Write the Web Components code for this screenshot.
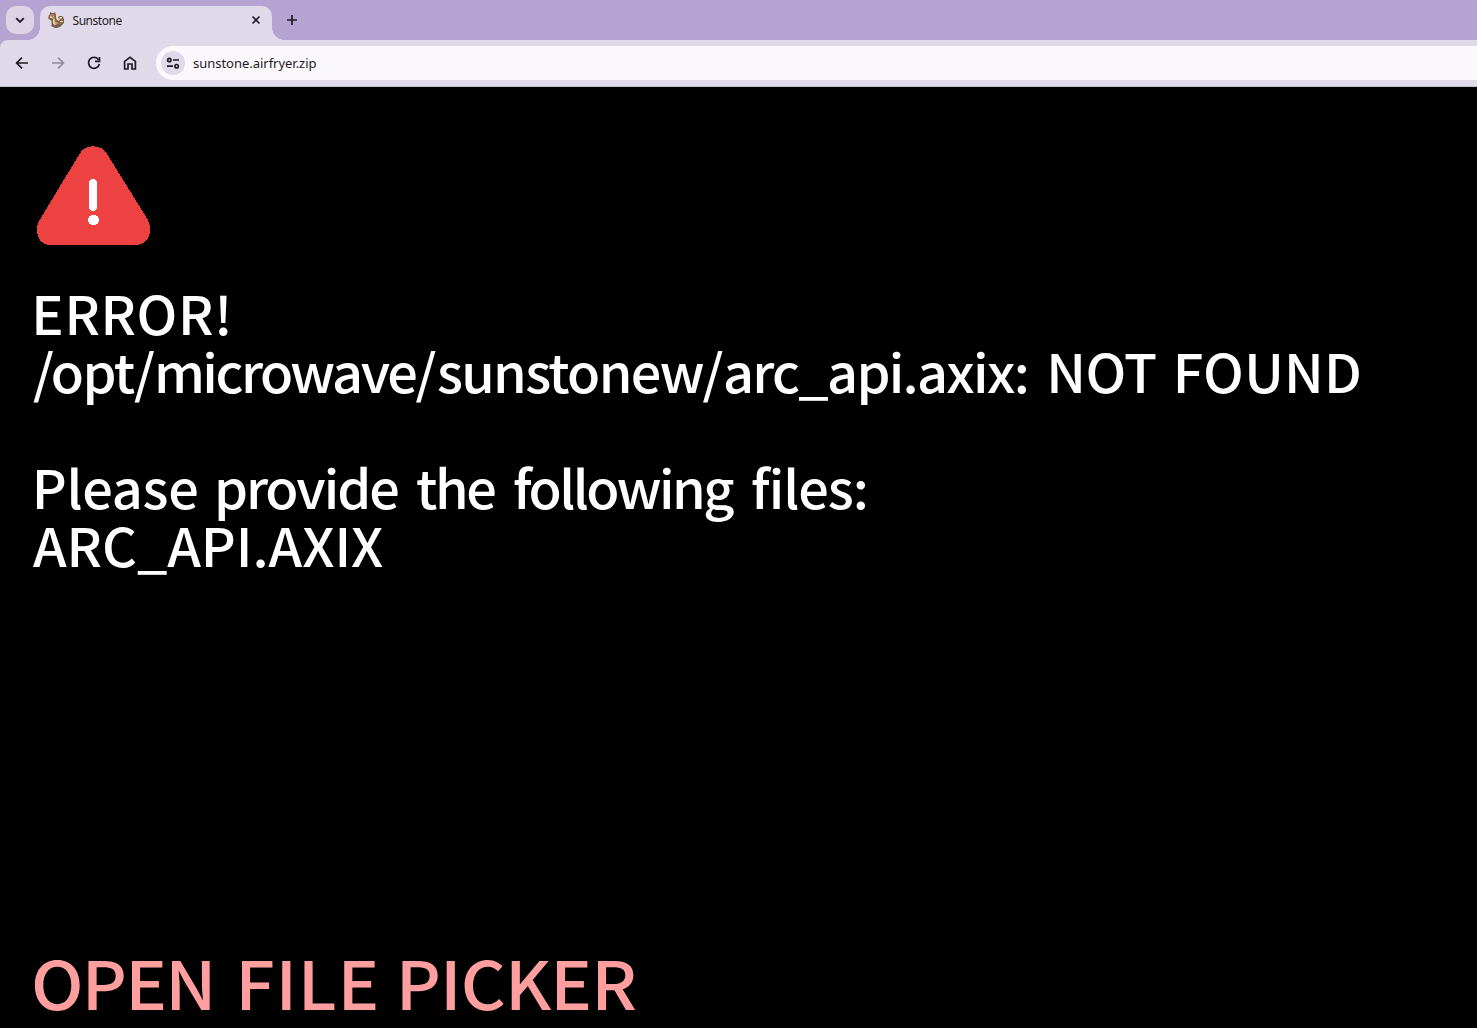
<!DOCTYPE html>
<html lang="en">
<head>
<meta charset="utf-8">
<title>Sunstone</title>
<style>
html,body{margin:0;height:100%;background:#000;overflow:hidden}
</style>
</head>
<body>
<app-window></app-window>
<script>
/* One line of text whose words are spaced to given ink positions.
   fit = "start:end start:end ..." for each segment; segments are split by "|",
   and a segment that follows a blank keeps it. stretch widens the glyphs. */
class FitLine extends HTMLElement {
  connectedCallback() {
    const root = this.attachShadow({mode: 'open'});
    const k = Number(this.getAttribute('stretch') || 1);
    root.innerHTML = '<style>:host{display:block;white-space:pre;transform-origin:0 0}</style>';
    if (k !== 1) this.style.transform = `scaleX(${k})`;
    const cs = getComputedStyle(this);
    const ctx = document.createElement('canvas').getContext('2d');
    ctx.font = `${cs.fontWeight} ${cs.fontSize} ${cs.fontFamily}`;
    const space = ctx.measureText(' ').width;
    const fits = this.getAttribute('fit').split(' ').map(p => p.split(':').map(v => v / k));
    let cursor = 0;
    this.getAttribute('text').split('|').forEach((raw, i) => {
      if (raw.startsWith(' ')) { root.append(' '); cursor += space; }
      const word = raw.trim(), m = ctx.measureText(word), [a, b] = fits[i];
      const ls = ((b - a) - (m.actualBoundingBoxRight + m.actualBoundingBoxLeft)) / (word.length - 1);
      const s = document.createElement('span');
      s.textContent = word;
      const start = a + m.actualBoundingBoxLeft;
      s.style.letterSpacing = ls + 'px';
      s.style.marginLeft = (start - cursor) + 'px';
      root.append(s);
      cursor = start + m.width + ls * word.length;
    });
  }
}
customElements.define('fit-line', FitLine);

const define = (name, html) => customElements.define(name, class extends HTMLElement {
  connectedCallback() { if (!this.shadowRoot) this.attachShadow({mode: 'open'}).innerHTML = html; }
});

define('pet-icon', `<style>:host{display:block;width:16px;height:16px}svg{display:block}</style>
<svg width="16" height="16">
<path fill="#75604f" d="M1 3l1-1V0l2 1h2l1-1 1 3v3l1 2 2 1 1-2-2-1 1-2h3l1 1 1 2v4l-2 2-2 2-3 1H7l-2-1-2-1 1-2-1-2 1-1-2-1-2-2z"/>
<path fill="#cf9a61" d="M2.500 2.500h4v4l1 3 3 1.500-2 1.500-3-1.500V7.500L2 5.500z"/>
<path fill="#f3dba8" d="M1.500 4.500H4V6H2zM5 7.500h1.500V11l2 1.700H6L4.800 11zM11.500 5h2.500v1.500h-2.500zM12 9h3v1.300h-3z"/>
<path fill="#b0713f" d="M5 2.500h1.500V4H5zM7 8h1.300v2H7zM12 7.300h3v1.200h-3zM9.500 11h2.500v1.200H9.500z"/>
<path fill="#40352f" d="M3.500 3.500h1v1h-1zM4 11.500h1v1H4z"/>
</svg>`);

define('tab-strip', `<style>
:host{display:flex;height:40px;background:#b5a4d1;box-sizing:border-box;padding:6px 0 0 6px;font:500 12px "Noto Sans","Open Sans",sans-serif;color:#1f1b24}
.menu{width:28px;height:28px;border-radius:10px;background:#dcd3e5}
svg{display:block}
.tab{box-sizing:border-box;width:232px;height:34px;background:#dfd9e9;border-radius:10px 10px 0 0;display:flex;padding:6px 0 0 8px}
.tab fit-line{width:200px;line-height:17px;margin-left:8px;font-weight:400}
.flare{align-self:flex-end;width:12px;height:12px;background:radial-gradient(circle at 100% 0,transparent 11.5px,#dfd9e9 12px)}
.left{width:12px;margin-left:-6px;background:radial-gradient(circle at 0 0,transparent 11.5px,#dfd9e9 12px)}
.plus{margin:8px 0 0 2px}
.close{flex:none;margin-left:-22px}
</style>
<div class="menu"><svg width="28" height="28"><path d="M10.200 12.200l3.800 3.800 3.800-3.800" fill="none" stroke="#1f1b24" stroke-width="1.800"/></svg></div>
<div class="flare left"></div>
<div class="tab"><pet-icon></pet-icon><fit-line text="Sunstone" fit="0.500:50.500"></fit-line>
<svg class="close" width="12" height="16"><path d="M2.500 4.500l7 7M9.500 4.500l-7 7" stroke="#1f1b24" stroke-width="1.600"/></svg></div>
<div class="flare"></div>
<svg class="plus" width="12" height="12"><path d="M6 1v10M1 6h10" stroke="#1f1b24" stroke-width="1.700"/></svg>`);

define('tool-bar', `<style>
:host{display:flex;height:47px;box-sizing:border-box;background:linear-gradient(#b5a4d1,#b5a4d1) 0 0/10px 10px no-repeat;}
.bar{flex:1;display:flex;align-items:center;background:#dfd9e9;border-radius:8px 0 0 0;border-bottom:1px solid #c2bdcb;padding-left:12px;box-sizing:border-box}
svg{display:block}
.icons{display:flex;gap:16px}
.field{flex:1;height:34px;margin-left:16px;border-radius:17px 0 0 17px;background:#faf8fd;display:flex;align-items:center;padding-left:5px}
.chip{width:24px;height:24px;border-radius:50%;background:#dfd9e9}
fit-line{margin-left:8px;font:400 13px "Noto Sans","Open Sans",sans-serif;line-height:20px;color:#1f1b24}
g{fill:none;stroke:#1f1b24;stroke-width:1.7}
</style>
<div class="bar"><div class="icons">
<svg width="20" height="20"><g><path d="M16 10H5M10 4.600L4.600 10l5.400 5.400"/></g></svg>
<svg width="20" height="20"><g style="stroke:#918b9c"><path d="M4 10h11M10 4.600l5.400 5.400-5.400 5.400"/></g></svg>
<svg width="20" height="20"><g><path d="M14.600 6.700A5.500 5.500 0 1 0 15.400 11"/><path d="M15.500 4v4.300H11"/></g></svg>
<svg width="20" height="20"><g><path d="M4.600 16V8.300L10 4.200l5.400 4.100V16h-3.400v-5H8v5z"/></g></svg>
</div><div class="field"><div class="chip"><svg width="24" height="24"><g><circle cx="8.300" cy="9" r="1.700"/><path d="M12 9h6M6 15.200h6"/><circle cx="15.600" cy="15.200" r="1.700"/></g></svg></div>
<fit-line text="sunstone.airfryer.zip" fit="0:123.500"></fit-line></div></div>`);

define('warning-sign', `<style>:host{display:block}svg{display:block}</style>
<svg width="116" height="100" shape-rendering="crispEdges"><path d="M43.500 8Q48 .3 57.200 .3T71 8L112 74Q114 78 114 84 113 98.500 99 99H15Q1.500 98.500 1 84 1 79 3 75z" fill="#ee4141"/>
<rect x="53" y="33" width="8" height="32" rx="4" fill="#fff"/><ellipse cx="57.500" cy="74" rx="5.500" ry="5.300" fill="#fff"/></svg>`);

define('error-page', `<style>
:host{display:flex;flex-direction:column;flex:1;box-sizing:border-box;background:#000;color:#fff;padding:59px 0 0 33px;font:500 52.5px "Noto Sans CJK JP",sans-serif;min-height:0}
warning-sign{margin-left:3px}
.msg{margin-top:37px}
.msg fit-line{height:58px;line-height:58px}
.gap{height:58px}
.open{margin-top:372px;font-size:67px;line-height:72px;height:72px;color:#ff9e9e}
</style>
<warning-sign></warning-sign>
<div class="msg">
<fit-line stretch="1.03" text="ERROR!" fit="3.500:195.500"></fit-line>
<fit-line stretch="1.03" text="/opt/|microwave/|sunstonew/|arc_api.axix:| NOT| FOUND" fit="0:121.500 125:403 405:690 692:993 1018.500:1123 1145:1326"></fit-line>
<div class="gap"></div>
<fit-line stretch="1.03" text="Please| provide| the| following| files:" fit="4:164 185:365 384:462 481:701 719:832"></fit-line>
<fit-line stretch="1.03" text="ARC_API.AXIX" fit="0:350"></fit-line>
</div>
<fit-line class="open" stretch="1.04" text="OPEN| FILE| PICKER" fit="1:177 208.500:343 369:603"></fit-line>`);

define('app-window', `<style>:host{display:flex;flex-direction:column;width:1477px;height:1028px;overflow:hidden}</style>
<tab-strip></tab-strip><tool-bar></tool-bar><error-page></error-page>`);
</script>
</body>
</html>
